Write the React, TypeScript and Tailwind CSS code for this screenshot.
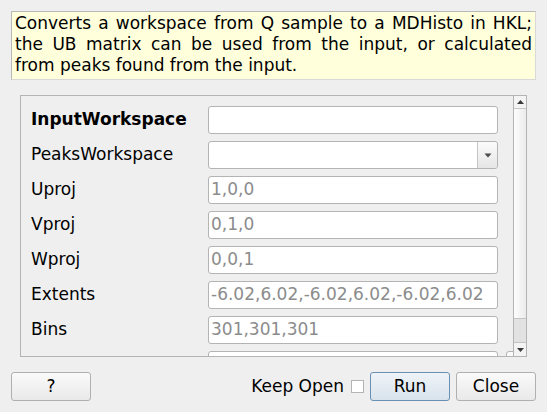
import React from "react";

const rows: { label: string; bold?: boolean; kind: "text" | "combo"; placeholder?: string }[] = [
  { label: "InputWorkspace", bold: true, kind: "text" },
  { label: "PeaksWorkspace", kind: "combo" },
  { label: "Uproj", kind: "text", placeholder: "1,0,0" },
  { label: "Vproj", kind: "text", placeholder: "0,1,0" },
  { label: "Wproj", kind: "text", placeholder: "0,0,1" },
  { label: "Extents", kind: "text", placeholder: "-6.02,6.02,-6.02,6.02,-6.02,6.02" },
  { label: "Bins", kind: "text", placeholder: "301,301,301" },
];

function Field({ kind, placeholder }: { kind: "text" | "combo"; placeholder?: string }) {
  if (kind === "combo") {
    return (
      <div className="flex h-[28px] w-[290px] shrink-0 rounded-[3px] border border-[#b4b4b4] bg-white">
        <div className="flex-1" />
        <div className="flex w-[20px] items-center justify-center border-l border-[#c4c4c4] bg-gradient-to-b from-[#fbfbfb] to-[#e6e6e6] rounded-r-[3px]">
          <svg width="8" height="5" viewBox="0 0 8 5">
            <path d="M0.5 0.5 L7.5 0.5 L4 4.5 Z" fill="#4a4a4a" />
          </svg>
        </div>
      </div>
    );
  }
  return (
    <div className="flex h-[28px] w-[290px] shrink-0 items-center rounded-[3px] border border-[#b4b4b4] bg-white pl-[2px] text-[17px] text-[#8c8c8c]">
      {placeholder}
    </div>
  );
}

function Button({ children, primary }: { children: React.ReactNode; primary?: boolean }) {
  return (
    <div
      className={
        primary
          ? "flex h-[29px] w-[80px] items-center justify-center rounded-[3px] border border-[#6a8fb5] bg-gradient-to-b from-[#eef3f8] to-[#d9e3ec] text-[17px] text-black"
          : "flex h-[29px] w-[80px] items-center justify-center rounded-[3px] border border-[#b0b0b0] bg-gradient-to-b from-[#fafafa] to-[#e9e9e9] text-[17px] text-black"
      }
    >
      {children}
    </div>
  );
}

export default function App() {
  return (
    <div className="flex h-[412px] w-[547px] flex-col bg-[#efefef] font-['DejaVu_Sans',sans-serif] text-black">
      {/* description */}
      <div className="ml-[11px] mt-[11px] h-[69px] w-[525px] border border-[#b8b8b8] border-r-[#d8d8d8] border-b-[#d8d8d8] bg-[#ffffdc] px-[3px] pt-[1px] text-justify text-[17px] leading-[21px]">
        Converts a workspace from Q sample to a MDHisto in HKL; the UB matrix can be used from the input, or calculated from peaks found from the input.
      </div>

      {/* property scroll area */}
      <div className="ml-[20px] mt-[15px] flex h-[262px] w-[507px] border border-[#b4b4b4]">
        <div className="flex flex-1 flex-col gap-[7px] overflow-hidden pl-[10px] pt-[10px]">
          {rows.map((r) => (
            <div key={r.label} className="flex h-[28px] shrink-0 items-center">
              <div className={`w-[177px] shrink-0 text-[17px] ${r.bold ? "font-bold" : ""}`}>{r.label}</div>
              <Field kind={r.kind} placeholder={r.placeholder} />
            </div>
          ))}
          <div className="flex h-[28px] shrink-0 items-start">
            <div className="w-[177px] shrink-0" />
            <div className="h-[28px] w-[290px] shrink-0 rounded-[3px] border border-[#b4b4b4] bg-white" />
            <div className="ml-[8px] h-[20px] w-[16px] shrink-0 rounded-[3px] border border-[#b4b4b4] bg-[#fafafa]" />
          </div>
        </div>
        <div className="flex w-[13px] flex-col border-l border-[#b4b4b4]">
          <div className="flex h-[13px] items-center justify-center border-b border-[#c8c8c8] bg-[#f4f4f4]">
            <svg width="7" height="4" viewBox="0 0 7 4">
              <path d="M0 4 L7 4 L3.5 0 Z" fill="#3a3a3a" />
            </svg>
          </div>
          <div className="flex-1 bg-gradient-to-r from-[#fdfdfd] to-[#ececec]" />
          <div className="h-[25px] border-y border-[#c4c4c4] bg-[#e2e2e2]" />
          <div className="flex h-[13px] items-center justify-center bg-[#f4f4f4]">
            <svg width="7" height="4" viewBox="0 0 7 4">
              <path d="M0 0 L7 0 L3.5 4 Z" fill="#3a3a3a" />
            </svg>
          </div>
        </div>
      </div>

      {/* bottom buttons */}
      <div className="mt-[15px] flex items-center px-[11px]">
        <Button>?</Button>
        <div className="flex-1" />
        <span className="text-[17px]">Keep Open</span>
        <div className="ml-[7px] h-[13px] w-[13px] border border-[#b4b4b4] bg-white" />
        <div className="ml-[6px]">
          <Button primary>Run</Button>
        </div>
        <div className="ml-[6px]">
          <Button>Close</Button>
        </div>
      </div>
    </div>
  );
}
